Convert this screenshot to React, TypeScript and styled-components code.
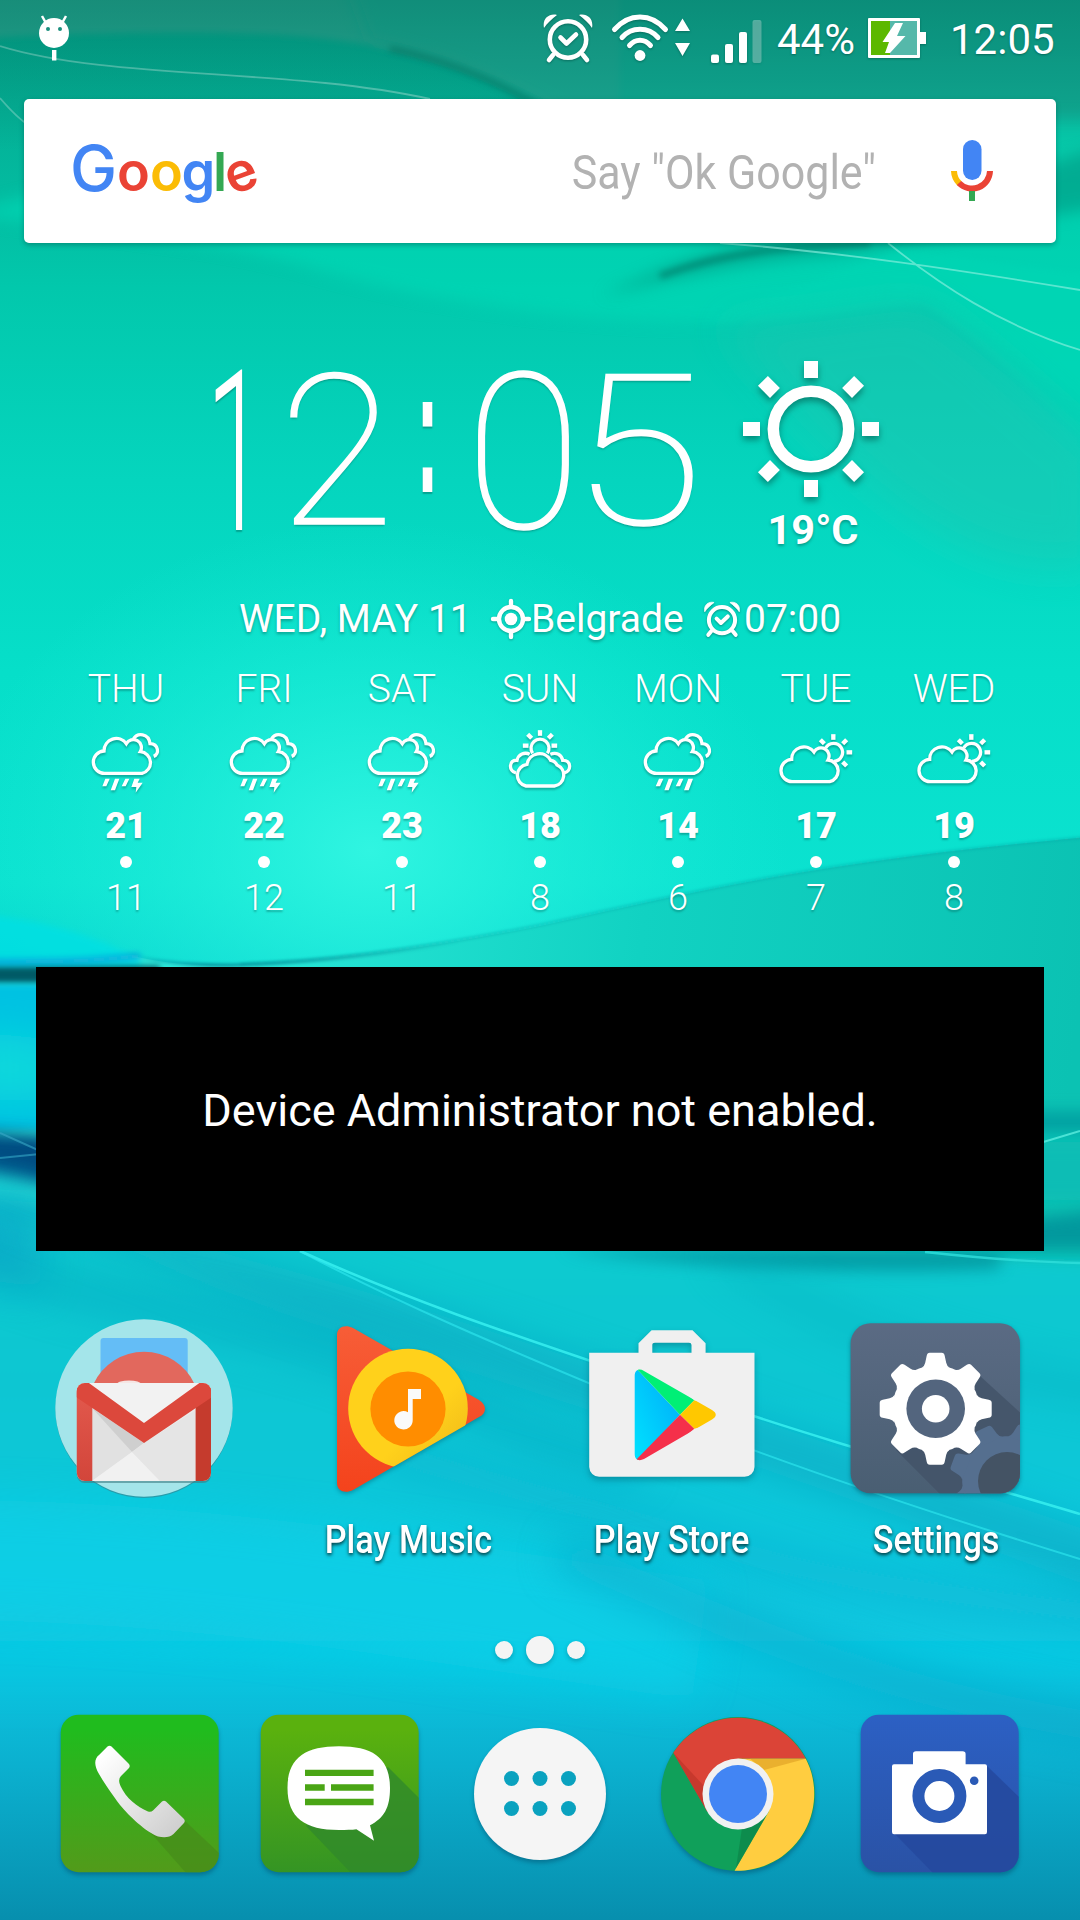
import React from "react";
import styled, { createGlobalStyle } from "styled-components";

const GlobalStyle = createGlobalStyle`
  html, body { margin: 0; padding: 0; }
  body { width: 1080px; height: 1920px; overflow: hidden; background: #06cfc4; }
  * { box-sizing: border-box; }
`;

const Screen = styled.main`
  position: relative;
  width: 1080px;
  height: 1920px;
  overflow: hidden;
  display: flex;
  flex-direction: column;
  font-family: Roboto, "Noto Sans", sans-serif;
  color: #fff;
`;

const WallpaperSvg = styled.svg`
  position: absolute;
  top: 0;
  left: 0;
  z-index: -1;
`;

const Icon = styled.svg<{ $shadow?: string }>`
  display: block;
  flex: none;
  overflow: visible;
  filter: ${(p) => (p.$shadow ? `drop-shadow(${p.$shadow})` : "none")};
`;

/* ---------- status bar ---------- */

const StatusBar = styled.header`
  height: 76px;
  flex: none;
  display: flex;
  align-items: center;
  justify-content: space-between;
  padding: 0 25px 0 39px;
`;

const StatusGroup = styled.div`
  display: flex;
  align-items: center;
`;

const StatusText = styled.span<{ $width: number; $left: number; $right: number }>`
  width: ${(p) => p.$width}px;
  margin-left: ${(p) => p.$left}px;
  margin-right: ${(p) => p.$right}px;
  padding-top: 4px;
  font-size: 42px;
  line-height: 50px;
  white-space: nowrap;
  text-shadow: 0 1px 2px rgba(0, 60, 50, 0.5);
`;

const StatusIcons = styled.div`
  display: flex;
  gap: 19px;
`;

/* ---------- search ---------- */

const SearchBar = styled.section`
  flex: none;
  height: 144px;
  margin: 23px 24px 0;
  padding: 0 63px 0 46px;
  display: flex;
  align-items: center;
  background: #fff;
  border-radius: 5px;
  box-shadow: 0 2px 5px rgba(0, 70, 60, 0.4);
`;

const Wordmark = styled.div`
  display: flex;
  align-items: baseline;
  height: 83px;
  line-height: 76px;
  font-family: Inter, Roboto, sans-serif;
`;

const Letter = styled.span<{ $c: string; $w: number; $size?: number; $tilt?: number }>`
  display: flex;
  justify-content: center;
  width: ${(p) => p.$w}px;
  color: ${(p) => p.$c};
  font-size: ${(p) => p.$size ?? 54}px;
  font-weight: ${(p) => (p.$size ? 500 : 600)};
  transform: rotate(${(p) => p.$tilt ?? 0}deg);
`;

const SearchHint = styled.span`
  margin-left: auto;
  margin-right: 75px;
  padding-top: 4px;
  font-size: 48px;
  line-height: 56px;
  color: #b2b2b2;
  white-space: nowrap;
  transform: scaleX(0.895);
  transform-origin: right center;
`;

/* ---------- clock widget ---------- */

const ClockRow = styled.section`
  flex: none;
  height: 200px;
  margin-top: 112px;
  padding-left: 180px;
  display: flex;
`;

const Digits = styled.div`
  display: flex;
  height: 183px;
  padding-top: 3px;
  line-height: 188px;
  font-size: 210px;
  font-weight: 100;
  text-shadow: 0 2px 2px rgba(0, 70, 60, 0.35);
`;

const Digit = styled.span<{ $w: number; $sx?: number; $sy?: number; $x?: number; $y?: number }>`
  display: flex;
  justify-content: center;
  width: ${(p) => p.$w}px;
  height: 188px;
  -webkit-text-stroke: 1.5px #fff;
  transform: translate(${(p) => p.$x ?? 0}px, ${(p) => p.$y ?? 0}px) scale(${(p) => p.$sx ?? 1}, ${(p) => p.$sy ?? 1});
`;

const NarrowDigit = styled(Digit)`
  font-weight: 300;
  -webkit-text-stroke: 0;
`;

const Colon = styled(Digit)`
  font-family: "Liberation Sans", Arial, sans-serif;
  font-size: 178px;
  font-weight: 700;
  -webkit-text-stroke: 0;
  transform: translateY(-21px) scaleX(0.38);
`;

const Weather = styled.div`
  width: 160px;
  margin-left: 37px;
  padding-top: 5px;
  display: flex;
  flex-direction: column;
  align-items: center;
`;

const Temperature = styled.span`
  margin-top: 9px;
  padding-left: 4px;
  font-size: 41.5px;
  line-height: 46px;
  font-weight: 700;
  text-shadow: 0 2px 3px rgba(0, 70, 60, 0.4);
`;

const DateRow = styled.section`
  flex: none;
  height: 46px;
  margin-top: 41px;
  display: flex;
  align-items: center;
  padding-left: 239px;
  font-size: 39px;
  line-height: 46px;
  white-space: nowrap;
  text-shadow: 0 2px 3px rgba(0, 70, 60, 0.4);
`;

const DateItem = styled.span<{ $w: number }>`
  width: ${(p) => p.$w}px;
`;

/* ---------- forecast ---------- */

const Forecast = styled.section`
  flex: none;
  margin: 23px 57px 0;
  height: 250px;
  display: grid;
  grid-template-columns: repeat(7, 138px);
`;

const Day = styled.div`
  display: flex;
  flex-direction: column;
  align-items: center;
  text-shadow: 0 2px 2px rgba(0, 70, 60, 0.35);
`;

const DayName = styled.span`
  height: 46px;
  margin-bottom: 18px;
  font-size: 39px;
  line-height: 48px;
  font-weight: 300;
`;

const High = styled.span`
  height: 36px;
  margin: 14px 0 13px;
  font-size: 36px;
  line-height: 38px;
  font-weight: 900;
`;

const Dot = styled.i<{ $d: number }>`
  display: block;
  width: ${(p) => p.$d}px;
  height: ${(p) => p.$d}px;
  border-radius: 50%;
  background: #fff;
`;

const Low = styled.span`
  margin-top: 11px;
  font-size: 36px;
  line-height: 38px;
  font-weight: 300;
`;

/* ---------- lower half ---------- */

const AdminPanel = styled.section`
  flex: none;
  height: 284px;
  margin: 52px 36px 0;
  padding-top: 4px;
  display: flex;
  align-items: center;
  justify-content: center;
  background: #000;
  font-size: 45px;
  line-height: 54px;
`;

const AppGrid = styled.section`
  flex: none;
  margin: 67px 12px 0;
  height: 244px;
  display: grid;
  grid-template-columns: repeat(4, 264px);
`;

const AppItem = styled.div`
  display: flex;
  flex-direction: column;
  align-items: center;
`;

const AppLabel = styled.span`
  margin-top: 19px;
  font-size: 39.5px;
  line-height: 46px;
  font-weight: 500;
  white-space: nowrap;
  transform: scaleX(0.868);
  text-shadow: 0 2px 4px rgba(0, 0, 0, 0.75);
`;

const Pager = styled.nav`
  flex: none;
  height: 28px;
  margin-top: 74px;
  display: flex;
  align-items: center;
  justify-content: center;
  gap: 13px;
`;

const PageDot = styled(Dot)`
  background: #f4f4f4;
  box-shadow: 0 2px 4px rgba(0, 60, 80, 0.3);
`;

const Dock = styled.footer`
  flex: none;
  margin: 50px 40px 0;
  display: grid;
  grid-template-columns: repeat(5, 200px);
  justify-items: center;
`;

/* ---------- drawings ---------- */

const Blur = ({ id, d }: { id: string; d: number }) => (
  <filter id={id} filterUnits="userSpaceOnUse" x="-150" y="-150" width="1380" height="2220">
    <feGaussianBlur stdDeviation={d} />
  </filter>
);

const Wallpaper = () => (
  <WallpaperSvg width="1080" height="1920" viewBox="0 0 1080 1920">
    <defs>
      <linearGradient id="base" x1="0" y1="0" x2="0" y2="1">
        <stop offset="0" stopColor="#03a58c" />
        <stop offset=".06" stopColor="#04b096" />
        <stop offset=".15" stopColor="#02c8ac" />
        <stop offset=".25" stopColor="#05d5be" />
        <stop offset=".35" stopColor="#06dfc9" />
        <stop offset=".46" stopColor="#0be2d0" />
        <stop offset=".52" stopColor="#06cfcf" />
        <stop offset=".66" stopColor="#08cbd0" />
        <stop offset=".76" stopColor="#0dc6da" />
        <stop offset=".86" stopColor="#0cc8e3" />
        <stop offset=".92" stopColor="#0bb0cf" />
        <stop offset="1" stopColor="#078fae" />
      </linearGradient>
      <linearGradient id="sea" gradientUnits="userSpaceOnUse" x1="0" y1="1195" x2="0" y2="1720">
        <stop offset="0" stopColor="#0accce" />
        <stop offset=".35" stopColor="#0ac6d2" />
        <stop offset=".7" stopColor="#0dc8de" />
        <stop offset="1" stopColor="#0cc8e3" stopOpacity="0" />
      </linearGradient>
      <radialGradient id="glow">
        <stop offset="0" stopColor="#32f6e2" stopOpacity=".95" />
        <stop offset="1" stopColor="#1ceedb" stopOpacity="0" />
      </radialGradient>
      <linearGradient id="topShade" x1="0" y1="0" x2="0" y2="1">
        <stop offset="0" stopColor="#00604f" stopOpacity=".35" />
        <stop offset="1" stopColor="#00604f" stopOpacity="0" />
      </linearGradient>
      <linearGradient id="right" gradientUnits="userSpaceOnUse" x1="200" y1="900" x2="1080" y2="1000">
        <stop offset="0" stopColor="#2ce9da" />
        <stop offset=".5" stopColor="#11d2c2" />
        <stop offset="1" stopColor="#0bc2b3" />
      </linearGradient>
      <linearGradient id="crease" gradientUnits="userSpaceOnUse" x1="126" y1="0" x2="460" y2="0">
        <stop offset="0" stopColor="#067c9c" stopOpacity="0" />
        <stop offset=".25" stopColor="#067c8c" />
        <stop offset="1" stopColor="#067c8c" stopOpacity="0" />
      </linearGradient>
      <Blur id="b1" d={1.5} />
      <Blur id="b3" d={3} />
      <Blur id="b8" d={8} />
      <Blur id="b20" d={20} />
    </defs>
    <rect width="1080" height="1920" fill="url(#base)" />
    {/* upper folds */}
    <path d="M-40 39C150 30 270 30 350 42C440 58 500 80 560 110L620 190V-40H-40Z" fill="#3aa794" opacity=".6" filter="url(#b3)" />
    <path d="M390 48C460 62 515 90 560 118" stroke="#006e5d" strokeWidth="7" fill="none" opacity=".65" filter="url(#b3)" />
    <path d="M370 42C450 56 520 90 580 125L1140 200V-40H340Z" fill="#15a792" opacity=".7" filter="url(#b8)" />
    <path d="M0 46C110 80 290 68 430 99" stroke="#7fd9c9" strokeWidth="1.8" fill="none" opacity=".7" />
    <path d="M0 98C12 112 20 120 30 126" stroke="#7fd9c9" strokeWidth="1.8" fill="none" opacity=".6" />
    <path d="M-40 215C140 235 230 245 300 265C420 300 560 320 700 322C800 322 860 306 930 303L1140 440V120H300Z" fill="#00dcb8" opacity=".6" filter="url(#b8)" />
    <path d="M600 296C660 270 700 248 800 238C900 225 1000 180 1120 140V205C980 225 900 250 820 256C720 264 670 280 600 296Z" fill="#009a83" opacity=".6" filter="url(#b8)" />
    <path d="M660 276C730 250 790 247 870 243" stroke="#00705f" strokeWidth="7" fill="none" opacity=".55" filter="url(#b3)" />
    <path d="M700 322C800 322 860 306 922 303C980 340 1030 390 1120 470V280L900 250Z" fill="#00d8b6" opacity=".4" filter="url(#b3)" />
    <path d="M720 322C800 322 860 306 922 303C980 340 1030 390 1100 450V560C950 600 800 420 720 322Z" fill="#20c4b0" opacity=".45" filter="url(#b20)" />
    <path d="M720 243C840 252 960 270 1080 290M888 243C940 285 1000 325 1080 350" stroke="#8af0df" strokeWidth="1.8" fill="none" opacity=".65" />
    {/* bright centre */}
    <ellipse cx="370" cy="850" rx="420" ry="330" fill="url(#glow)" />
    {/* middle swoosh */}
    <path d="M131 955C160 964 200 966 240 965C330 962 430 948 540 926C680 896 800 862 1120 834V1300H-40V960Z" fill="url(#right)" />
    <path d="M240 964C330 961 430 947 540 925C680 895 800 862 1120 834" stroke="#08a9a8" strokeWidth="2" fill="none" opacity=".6" filter="url(#b1)" />
    <path d="M126 953C160 964 200 966 240 965C320 962 390 954 470 940" stroke="url(#crease)" strokeWidth="3.500" fill="none" opacity=".7" filter="url(#b1)" />
    <path d="M-40 912C50 920 100 938 140 960V975H-40Z" fill="#06e0e4" opacity=".8" filter="url(#b3)" />
    <rect x="-40" y="966" width="200" height="18" fill="#005a66" filter="url(#b3)" />
    <path d="M-40 962C40 962 90 962 140 956" stroke="#0a9fdc" strokeWidth="5" fill="none" filter="url(#b3)" />
    <rect x="-40" y="984" width="130" height="146" fill="#03c2e2" filter="url(#b3)" />
    <path d="M-40 1030V1100H60V1040Z" fill="#08d8dc" filter="url(#b20)" />
    <path d="M-40 1130L80 1138V1192L-40 1168Z" fill="#014a80" filter="url(#b8)" />
    <path d="M0 1133L60 1160M0 1158L60 1152" stroke="#3aa9c8" strokeWidth="2" opacity=".6" />
    {/* right hand side */}
    <path d="M1000 1112H1120V1132H1000Z" fill="#059fa0" filter="url(#b8)" />
    <path d="M1000 1142H1120V1200H1000Z" fill="#09bdb5" filter="url(#b8)" />
    <path d="M1040 1143L1080 1131" stroke="#5ceee0" strokeWidth="2" opacity=".8" />
    {/* lower sea */}
    <path d="M-60 1195C200 1215 500 1240 1140 1262V1720H-60Z" fill="url(#sea)" filter="url(#b8)" />
    <path d="M-60 1190H40V1290L-60 1270Z" fill="#08aecb" opacity=".8" filter="url(#b20)" />
    <path d="M560 1250H1140V1205L1000 1222V1268C850 1275 680 1265 560 1250Z" fill="#058e98" opacity=".8" filter="url(#b8)" />
    <path d="M-60 1180C100 1240 200 1290 380 1345C600 1410 860 1500 1180 1620V1560C900 1470 560 1350 360 1290C220 1250 60 1210 -60 1160Z" fill="#08a4c0" opacity=".6" filter="url(#b20)" />
    <path d="M-60 1240C60 1300 200 1310 330 1350C440 1385 520 1440 640 1470" stroke="#049fbc" strokeWidth="30" fill="none" opacity=".5" filter="url(#b20)" />
    <path d="M-60 1560C200 1560 420 1600 700 1640" stroke="#10d2ea" strokeWidth="120" fill="none" opacity=".6" filter="url(#b20)" />
    <path d="M380 1450C480 1480 560 1500 700 1540C800 1575 900 1590 1160 1620" stroke="#07a7cb" strokeWidth="30" fill="none" opacity=".45" filter="url(#b20)" />
    <path d="M560 1550C760 1640 900 1700 1150 1735" stroke="#07a2c4" strokeWidth="34" fill="none" opacity=".55" filter="url(#b20)" />
    <path d="M720 1250C800 1310 900 1360 1150 1400" stroke="#08a7b8" strokeWidth="24" fill="none" opacity=".4" filter="url(#b20)" />
    <path d="M300 1251C430 1310 560 1350 700 1398C830 1443 960 1478 1080 1514" stroke="#37f0f0" strokeWidth="2.6" fill="none" opacity=".85" />
    <path d="M300 1251C430 1320 560 1370 700 1430C830 1480 960 1522 1080 1559" stroke="#2ee6ee" strokeWidth="2" fill="none" opacity=".65" />
    <path d="M925 1252C980 1258 1030 1262 1080 1263" stroke="#2fe0dc" strokeWidth="2.4" fill="none" opacity=".8" />
    <rect width="1080" height="150" fill="url(#topShade)" />
  </WallpaperSvg>
);

const AndroidIcon = () => (
  <Icon width="30" height="46" viewBox="0 0 30 46" fill="#fff">
    <path d="M3 1L8 10M27 1L22 10" stroke="#fff" strokeWidth="2.5" />
    <ellipse cx="15" cy="18" rx="15" ry="15" />
    <circle cx="9" cy="14" r="2" fill="#1a8f7e" />
    <circle cx="21" cy="14" r="2" fill="#1a8f7e" />
    <rect x="13" y="35" width="4.4" height="10.5" />
  </Icon>
);

const AlarmIcon = ({ size = 50, weight = 4.6 }: { size?: number; weight?: number }) => (
  <Icon width={size} height={size} viewBox="0 0 50 50" fill="none" stroke="#fff" strokeWidth={weight} $shadow="0 1px 1px rgba(0,70,60,.5)">
    <circle cx="25" cy="26.5" r="18.2" />
    <path d="M10 42L6 47M40 42L44 47" strokeLinecap="round" />
    <path d="M17.500 24.500L23.500 30.500L33 21.500" strokeLinecap="round" strokeLinejoin="round" />
    <path d="M1 15C-1 6 6 0 14 2C9 6 4 10 1 15ZM49 15C51 6 44 0 36 2C41 6 46 10 49 15Z" fill="#fff" strokeWidth={weight - 4.6} />
  </Icon>
);

const WifiIcon = () => (
  <Icon width="80" height="50" viewBox="0 0 80 50" fill="none" stroke="#fff" strokeWidth="5" strokeLinecap="round" $shadow="0 1px 1px rgba(0,70,60,.5)">
    <path d="M2.500 16.500C17 -.3 39 -.3 53.500 16.500M10 24.500C19.500 13.500 36.500 13.500 46 24.500M17.500 32.500C23.500 25.500 32.500 25.500 38.500 32.500" />
    <circle cx="28" cy="42.500" r="5.4" fill="#fff" stroke="none" />
    <path d="M63 18L70.500 5.500L78 18ZM63 30L70.500 43L78 30Z" fill="#fff" stroke="none" />
  </Icon>
);

const SignalIcon = () => (
  <Icon width="50" height="50" viewBox="0 0 50 50" fill="#fff" $shadow="0 1px 1px rgba(0,70,60,.5)">
    <rect x="0" y="41.500" width="8" height="8.500" rx="2" />
    <rect x="14" y="31" width="8" height="19" rx="2" />
    <rect x="28" y="19" width="8" height="31" rx="2" />
    <rect x="41.500" y="7" width="9" height="43" rx="2" opacity=".3" />
  </Icon>
);

const BatteryIcon = () => (
  <Icon width="58" height="40" viewBox="0 0 58 40" $shadow="0 1px 1px rgba(0,70,60,.5)">
    <rect width="52" height="40" rx="1" fill="#fff" />
    <rect x="52" y="14" width="6" height="12" fill="#fff" />
    <rect x="3" y="3" width="46" height="34" fill="#55b8aa" />
    <rect x="3" y="3" width="19" height="34" fill="#5cb800" />
    <path d="M27 5L35 5L29 18H37.500L22 35H17L21 24H14.500Z" fill="#fff" />
  </Icon>
);

const MicIcon = () => (
  <Icon width="42" height="62" viewBox="0 0 42 62" fill="none">
    <rect x="12" y="0" width="18.500" height="40" rx="9.200" fill="#4285f4" />
    <path d="M3 31A18 18 0 0 0 8.500 43.500" stroke="#fbbc05" strokeWidth="6" />
    <path d="M8 43A18 18 0 0 0 39 31" stroke="#ea4335" strokeWidth="6" />
    <rect x="18" y="51" width="6" height="10" fill="#34a853" />
  </Icon>
);

const SunIcon = () => (
  <Icon width="138" height="138" viewBox="-69 -69 138 138" $shadow="0 4px 3px rgba(0,80,70,.55)">
    <circle r="37.700" fill="none" stroke="#fff" strokeWidth="11.500" />
    {[0, 45, 90, 135, 180, 225, 270, 315].map((a) => (
      <rect key={a} x="-7" y="-68" width="14" height="17" fill="#fff" transform={`rotate(${a})`} />
    ))}
  </Icon>
);

const GpsIcon = () => (
  <Icon width="40" height="40" viewBox="0 0 40 40" fill="none" stroke="#fff" strokeWidth="4.400" strokeLinecap="round" $shadow="0 1px 1px rgba(0,70,60,.4)">
    <circle cx="20" cy="20" r="12" />
    <circle cx="20" cy="20" r="6.300" fill="#fff" stroke="none" />
    <path d="M20 2V7M20 33V38M2 20H7M33 20H38" />
  </Icon>
);

const CLOUD = "M43 134A33 33 0 0 1 40 67A37 37 0 0 1 107 45A24 24 0 0 1 149 69A33 33 0 0 1 154 134Z";

type Sky = "storm" | "rain" | "cloudySun" | "partly";

const Ray = ({ x, y, a }: { x: number; y: number; a: number }) => (
  <rect x="-6.500" y="-8.500" width="13" height="17" fill="#fff" stroke="none" transform={`translate(${x} ${y}) rotate(${a})`} />
);

const SkyIcon = ({ kind }: { kind: Sky }) => (
  <Icon width="72" height="64" viewBox="0 0 216 192" fill="none" stroke="#fff" strokeWidth="10" $shadow="0 2px 1px rgba(0,80,70,.4)">
    {(kind === "storm" || kind === "rain") && (
      <g transform="translate(2 -1)">
        <path d={CLOUD} />
        <path d="M128 31C140 11 174 13 178 45C204 46 207 76 189 83" />
      </g>
    )}
    {kind === "storm" && (
      <path d="M46 149H59L49 172H37ZM75 149H88L75 184H62ZM106 149H118L107 172H95ZM133 149H149L143 161H158L137 191L139 174H124Z" fill="#fff" stroke="none" />
    )}
    {kind === "rain" && (
      <path d="M51 149H64L54 172H41ZM80 149H93L80 184H67ZM112 149H124L114 172H101ZM139 149H153L140 184H126Z" fill="#fff" stroke="none" />
    )}
    {kind === "partly" && (
      <>
        <path d={CLOUD} transform="translate(-5 24)" />
        <path d="M137 57A27 27 0 1 1 162 97" />
        <Ray x={160} y={24} a={0} />
        <Ray x={208} y={70} a={90} />
        <Ray x={194} y={38} a={45} />
        <Ray x={127} y={38} a={-45} />
        <Ray x={194} y={105} a={135} />
      </>
    )}
    {kind === "cloudySun" && (
      <>
        <path d="M66 171A33 33 0 0 1 69 106A38 38 0 0 1 140 94A24 24 0 0 1 159 108A33 33 0 0 1 151 171Z" />
        <path d="M36 132C12 126 15 91 39 94C43 76 62 68 77 76M139 76C157 68 173 77 176 94C202 92 204 127 180 132" />
        <path d="M86 73A27 27 0 1 1 130 73" />
        <Ray x={108} y={12} a={0} />
        <Ray x={139} y={22} a={45} />
        <Ray x={77} y={22} a={-45} />
        <Ray x={151} y={50} a={90} />
        <Ray x={65} y={50} a={90} />
      </>
    )}
  </Icon>
);

const InboxFolderIcon = () => (
  <Icon width="180" height="180" viewBox="0 0 180 180">
    <defs>
      <linearGradient id="gmSide" x1="0" y1="0" x2="0" y2="1">
        <stop offset="0" stopColor="#e2594d" />
        <stop offset="1" stopColor="#d2453a" />
      </linearGradient>
      <clipPath id="gmClip"><rect x="22.800" y="65" width="134.200" height="98" rx="8" /></clipPath>
    </defs>
    <circle cx="90" cy="91.500" r="88.500" fill="#3a7f8a" opacity=".6" />
    <circle cx="90" cy="90" r="88.700" fill="#a4e5ea" />
    <rect x="46.500" y="20" width="87.200" height="60" rx="3" fill="#64bdf6" />
    <path d="M39.500 66A55.700 55.700 0 0 1 140.500 66Z" fill="#e2685d" />
    <ellipse cx="75" cy="66" rx="12" ry="3.500" fill="#f5e6e4" />
    <rect x="22.800" y="67" width="134.200" height="98" rx="8" fill="#407b82" opacity=".6" />
    <g clipPath="url(#gmClip)">
      <rect x="22" y="65" width="136" height="99" fill="#ebebeb" />
      <path d="M38 88L78 134L38 163Z" fill="#e1e1e1" />
      <path d="M38 90L90 125L78 134Z" fill="#cfcfcf" />
      <path d="M38 163L78 134L106 163Z" fill="#f1f1f1" />
      <path d="M90 125L141.600 92V163H106L78 134Z" fill="#e5e5e5" />
      <rect x="22" y="70" width="16.300" height="95" fill="url(#gmSide)" />
      <rect x="141.600" y="70" width="16" height="95" fill="#c53b2d" />
      <path d="M34 64H147L90 106Z" fill="#f2f2f2" />
      <path d="M22 64H33.500L90 105L146.800 64H158V79L90 125L22 79Z" fill="#dc483c" />
    </g>
  </Icon>
);

const PlayMusicIcon = () => (
  <Icon width="180" height="180" viewBox="0 0 180 180" $shadow="0 2px 2px rgba(0,60,80,.35)">
    <defs>
      <linearGradient id="pm" x1="0" y1="0" x2="0" y2="1">
        <stop offset="0" stopColor="#f75d37" />
        <stop offset="1" stopColor="#f4431c" />
      </linearGradient>
      <linearGradient id="pmRing" x1="0" y1="0" x2="1" y2="1">
        <stop offset=".6" stopColor="#ffd11b" />
        <stop offset="1" stopColor="#eeb71a" />
      </linearGradient>
      <clipPath id="pmClip"><path d="M0 0H180V88.500L35 172H0Z" /></clipPath>
    </defs>
    <path d="M19 17C19 9 27 6 35 10L161 82C169 87 169 95 161 99L35 172C27 176 19 173 19 165Z" fill="url(#pm)" />
    <circle cx="90" cy="90.500" r="59.800" fill="url(#pmRing)" clipPath="url(#pmClip)" />
    <circle cx="90" cy="91" r="37.600" fill="#ff8d00" />
    <path d="M90 71H103V81H94.700V102A9.200 9.200 0 1 1 90 94.200Z" fill="#fafafa" />
  </Icon>
);

const PlayStoreIcon = () => (
  <Icon width="180" height="180" viewBox="0 0 180 180" $shadow="0 3px 3px rgba(0,60,80,.35)">
    <defs>
      <linearGradient id="psBlue" x1="1" y1="0" x2="0" y2="1">
        <stop offset="0" stopColor="#00a9f8" />
        <stop offset="1" stopColor="#00e4ff" />
      </linearGradient>
      <clipPath id="psClip"><path d="M52.700 58C52.700 52 57 50 62 53L130 92C135 95 135 98.500 130 101.500L62 141C57 143.500 52.700 142 52.700 136Z" /></clipPath>
    </defs>
    <path fillRule="evenodd" d="M7.200 34.700H56.500V25.300L69.600 12.300H110.500L123.600 25.300V34.700H172.500V149A10 10 0 0 1 162.500 158.700H17.200A10 10 0 0 1 7.200 149ZM70.300 34.700H109.500V27Q109.500 24.700 107 24.700H73Q70.300 24.700 70.300 27Z" fill="#f0f0f0" />
    <g clipPath="url(#psClip)">
      <path d="M52 48L98 96.700L52 146Z" fill="url(#psBlue)" />
      <path d="M52 48H70L112.300 82.300L98 96.700Z" fill="#00ef76" />
      <path d="M112.300 82.300L140 90V104L112.300 110.700L98 96.700Z" fill="#ffc800" />
      <path d="M98 96.700L112.300 110.700L70 146H50Z" fill="#f5304a" />
    </g>
  </Icon>
);

const TEETH = [0, 45, 90, 135, 180, 225, 270, 315];
const Gear = () => (
  <>
    <circle r="43.500" />
    {TEETH.map((a) => (
      <path key={a} d="M-14 -41Q-11 -43 -10.500 -46L-9 -53Q-8.500 -56 -6 -56H6Q8.500 -56 9 -53L10.500 -46Q11 -43 14 -41Z" transform={`rotate(${a})`} />
    ))}
  </>
);

const SettingsIcon = () => (
  <Icon width="180" height="180" viewBox="0 0 180 180" $shadow="0 2px 2px rgba(0,50,70,.4)">
    <defs>
      <linearGradient id="st" x1="0" y1="0" x2="0" y2="1">
        <stop offset="0" stopColor="#5b6b84" />
        <stop offset="1" stopColor="#495e72" />
      </linearGradient>
      <clipPath id="stClip"><rect x="4.600" y="5.300" width="169.400" height="170" rx="20" /></clipPath>
    </defs>
    <g clipPath="url(#stClip)">
      <rect width="180" height="180" fill="url(#st)" />
      <path d="M134 58L180 100V180H98L50 132Z" fill="#435468" opacity=".85" />
      <g transform="translate(161 163) rotate(20) scale(1.030)" fill="#556f8f"><Gear /></g>
      <circle cx="161" cy="163" r="29" fill="#445364" />
    </g>
    <g transform="translate(89.700 90.700)" fill="#fff"><Gear /></g>
    <circle cx="89.700" cy="90.700" r="29.300" fill="#53657e" />
    <circle cx="89.700" cy="90.700" r="13.800" fill="#fff" />
  </Icon>
);

const DOCK_SHADOW = "0 3px 2px rgba(0,50,80,.35)";

const PhoneIcon = () => (
  <Icon width="160" height="160" viewBox="0 0 160 160" $shadow={DOCK_SHADOW}>
    <defs>
      <linearGradient id="ph" x1="0" y1="0" x2="0" y2="1">
        <stop offset=".1" stopColor="#20bc1e" />
        <stop offset="1" stopColor="#539a1a" />
      </linearGradient>
      <linearGradient id="hs" x1="0" y1="0" x2="1" y2="1">
        <stop offset=".1" stopColor="#fff" />
        <stop offset=".9" stopColor="#d0d0d0" />
      </linearGradient>
      <clipPath id="dockClip"><rect x=".7" y=".7" width="158" height="157.500" rx="18" /></clipPath>
    </defs>
    <g clipPath="url(#dockClip)">
      <rect width="160" height="160" fill="url(#ph)" />
      <path d="M125 107L160 140V160H127L90 118Z" fill="#468c1a" opacity=".7" />
    </g>
    <path d="M47.500 32.500Q49.500 31 51.500 32.500L68.500 49.500Q71 52 68.500 54.500L61 62Q57.500 65.500 60.500 72C66 84 77 93 88 97.500Q91 98.500 93 96.500L102 87.500Q104 86 106 87.500L123.500 104.500Q126 107 123.500 109.500L113.500 120Q108 125 98 122.500C86 118 69 102 60 91C52 80 44 69 39 60C34 51 34 45 39 41Z" fill="url(#hs)" />
  </Icon>
);

const MessageIcon = () => (
  <Icon width="160" height="160" viewBox="0 0 160 160" $shadow={DOCK_SHADOW}>
    <defs>
      <linearGradient id="ms" x1="0" y1="0" x2="0" y2="1">
        <stop offset=".1" stopColor="#5ab10e" />
        <stop offset="1" stopColor="#349424" />
      </linearGradient>
    </defs>
    <g clipPath="url(#dockClip)">
      <rect width="160" height="160" fill="url(#ms)" />
      <path d="M128 53L160 85V160H92L46 112Z" fill="#318a2a" opacity=".8" />
    </g>
    <path d="M79 32.300C113 32.300 130 44 130 74C130 94 124 104 110 111.300L114 126.700L96.400 115.300C92 116 86 116 79 116C45 116 27.500 104 27.500 74C27.500 44 45 32.300 79 32.300Z" fill="#fff" />
    <path d="M45 55.700H113.600V62H45ZM45 70.200H64.700V76.700H45ZM71 70.200H113.600V76.700H71ZM45 84.700H113.600V91.300H45Z" fill="#4aa515" />
  </Icon>
);

const DrawerIcon = () => (
  <Icon width="160" height="160" viewBox="0 0 160 160" $shadow={DOCK_SHADOW}>
    <circle cx="80" cy="80" r="66" fill="#f5f5f5" />
    {[51.500, 80, 108.500].map((x) => (
      <g key={x} fill="#0aa2bf">
        <circle cx={x} cy="64.500" r="7.500" />
        <circle cx={x} cy="94.500" r="7.500" />
      </g>
    ))}
  </Icon>
);

const ChromeIcon = () => (
  <Icon width="160" height="160" viewBox="0 0 160 160" $shadow={DOCK_SHADOW}>
    <circle cx="78" cy="80" r="77" fill="#10a05a" />
    <path d="M13.300 38.700A77 77 0 0 1 145.800 44.700H78V80L47.300 97.700Z" fill="#db4437" />
    <path d="M13.300 38.700L47.300 97.700L44 72Z" fill="#b93226" opacity=".6" />
    <path d="M78 44.700H145.800A77 77 0 0 1 74.600 156.700L108.700 97.700L78 80Z" fill="#ffcd40" />
    <path d="M90 44.700H145.800L104 56Z" fill="#e5a929" opacity=".8" />
    <path d="M82 114L105.600 103L76 154Z" fill="#0b7f45" opacity=".6" />
    <circle cx="78" cy="80" r="35.500" fill="#f1f1f1" />
    <circle cx="78" cy="80" r="29" fill="#4285f4" />
  </Icon>
);

const CameraIcon = () => (
  <Icon width="160" height="160" viewBox="0 0 160 160" $shadow={DOCK_SHADOW}>
    <defs>
      <linearGradient id="cm" x1="0" y1="0" x2="0" y2="1">
        <stop offset="0" stopColor="#2c60c4" />
        <stop offset="1" stopColor="#2a52a5" />
      </linearGradient>
    </defs>
    <g clipPath="url(#dockClip)">
      <rect width="160" height="160" fill="url(#cm)" />
      <path d="M126 51L160 84V160H74L34 119Z" fill="#24499d" opacity=".85" />
    </g>
    <path d="M34 50.300H53V40Q53 37.200 56 37.200H102.600Q105.600 37.200 105.600 40V50.300H125Q127 50.300 127 52.300V118Q127 120.300 125 120.300H34Q32 120.300 32 118V52.300Q32 50.300 34 50.300Z" fill="#fff" />
    <circle cx="79.400" cy="82" r="21" fill="#fff" stroke="#2a5ab6" strokeWidth="12" />
    <circle cx="114.200" cy="66.700" r="4.300" fill="#2a5ab6" />
  </Icon>
);

/* ---------- data ---------- */

const DAYS: { name: string; sky: Sky; high: number; low: number }[] = [
  { name: "THU", sky: "storm", high: 21, low: 11 },
  { name: "FRI", sky: "storm", high: 22, low: 12 },
  { name: "SAT", sky: "storm", high: 23, low: 11 },
  { name: "SUN", sky: "cloudySun", high: 18, low: 8 },
  { name: "MON", sky: "rain", high: 14, low: 6 },
  { name: "TUE", sky: "partly", high: 17, low: 7 },
  { name: "WED", sky: "partly", high: 19, low: 8 },
];

const APPS = [
  { label: "", Art: InboxFolderIcon },
  { label: "Play Music", Art: PlayMusicIcon },
  { label: "Play Store", Art: PlayStoreIcon },
  { label: "Settings", Art: SettingsIcon },
];

export default function App() {
  return (
    <Screen>
      <GlobalStyle />
      <Wallpaper />
      <StatusBar>
        <AndroidIcon />
        <StatusGroup>
          <StatusIcons>
            <AlarmIcon />
            <WifiIcon />
            <SignalIcon />
          </StatusIcons>
          <StatusText $width={79} $left={16} $right={12}>44%</StatusText>
          <BatteryIcon />
          <StatusText $width={105} $left={24} $right={0}>12:05</StatusText>
        </StatusGroup>
      </StatusBar>

      <SearchBar>
        <Wordmark>
          <Letter $c="#4285f4" $w={47} $size={63}>G</Letter>
          <Letter $c="#ea4335" $w={33}>o</Letter>
          <Letter $c="#fbbc05" $w={33}>o</Letter>
          <Letter $c="#4285f4" $w={31}>g</Letter>
          <Letter $c="#34a853" $w={12}>l</Letter>
          <Letter $c="#ea4335" $w={28} $tilt={-20}>e</Letter>
        </Wordmark>
        <SearchHint>Say "Ok Google"</SearchHint>
        <MicIcon />
      </SearchBar>

      <ClockRow>
        <Digits>
          <NarrowDigit $w={97} $sx={0.5} $sy={1.07} $x={7} $y={1}>1</NarrowDigit>
          <Digit $w={121} $x={-1}>2</Digit>
          <Colon $w={59}>:</Colon>
          <Digit $w={133} $sy={1.03} $y={2}>0</Digit>
          <Digit $w={104} $sx={1.15} $x={-5}>5</Digit>
        </Digits>
        <Weather>
          <SunIcon />
          <Temperature>19°C</Temperature>
        </Weather>
      </ClockRow>

      <DateRow>
        <DateItem $w={252}>WED, MAY 11</DateItem>
        <GpsIcon />
        <DateItem $w={173}>Belgrade</DateItem>
        <AlarmIcon size={36} weight={5.6} />
        <DateItem $w={100}>&#8202;07:00</DateItem>
      </DateRow>

      <Forecast>
        {DAYS.map((d) => (
          <Day key={d.name + d.high}>
            <DayName>{d.name}</DayName>
            <SkyIcon kind={d.sky} />
            <High>{d.high}</High>
            <Dot $d={12} />
            <Low>{d.low}</Low>
          </Day>
        ))}
      </Forecast>

      <AdminPanel>Device Administrator not enabled.</AdminPanel>

      <AppGrid>
        {APPS.map(({ label, Art }) => (
          <AppItem key={label}>
            <Art />
            {label && <AppLabel>{label}</AppLabel>}
          </AppItem>
        ))}
      </AppGrid>

      <Pager>
        <PageDot $d={18} />
        <PageDot $d={28} />
        <PageDot $d={18} />
      </Pager>

      <Dock>
        <PhoneIcon />
        <MessageIcon />
        <DrawerIcon />
        <ChromeIcon />
        <CameraIcon />
      </Dock>
    </Screen>
  );
}
